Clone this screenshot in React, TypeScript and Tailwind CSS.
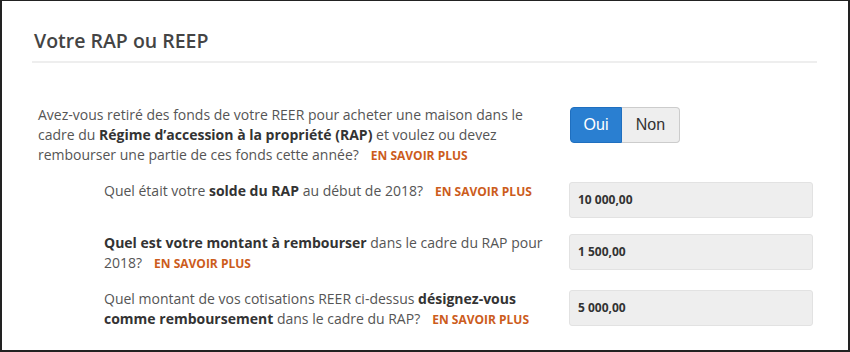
import React from "react";

const Info = () => (
  <span className="ml-3 whitespace-nowrap text-[12px] font-bold text-[#cc5c1c]">EN SAVOIR PLUS</span>
);

const B = ({ children }: { children: React.ReactNode }) => (
  <b className="font-bold text-[#333]">{children}</b>
);

function AmountRow({ label, value }: { label: React.ReactNode; value: string }) {
  return (
    <div className="flex items-start">
      <div className="w-[511px] shrink-0 pl-[66px] text-[14px] leading-[20px] text-[#555]">{label}</div>
      <div className="mt-[1px] ml-[20px] flex h-[36px] w-[244px] items-center rounded-[3px] border border-[#e2e2e2] bg-[#eeeeee] px-[8px] font-['Open_Sans',sans-serif] text-[12px] font-bold text-[#333]">
        {value}
      </div>
    </div>
  );
}

export default function App() {
  return (
    <div className="h-[352px] w-[850px] border-x-2 border-t border-b-2 border-[#222] bg-white font-['Open_Sans',sans-serif]">
      <div className="px-[30px] pt-[26px]">
        <h2 className="pl-[2px] text-[19.5px] font-semibold leading-[28px] text-[#444]">Votre RAP ou REEP</h2>
        <div className="mt-[6px] h-[2px] w-[785px] bg-[#eeeeee]" />

        <div className="mt-[42px] flex items-start pl-[6px]">
          <p className="w-[500px] shrink-0 text-[14px] leading-[20px] text-[#555]">
            Avez-vous retiré des fonds de votre REER pour acheter une maison dans le cadre du{" "}
            <B>Régime d’accession à la propriété (RAP)</B> et voulez ou devez rembourser une partie de ces
            fonds cette année?
            <Info />
          </p>
          <div className="ml-[32px] mt-[2px] flex font-['Liberation_Sans',Arial,sans-serif] text-[16px]">
            <button className="h-[36px] w-[52px] rounded-l-[4px] border border-[#1f6fbf] bg-[#2a7fd1] text-white">
              Oui
            </button>
            <button className="h-[36px] w-[58px] rounded-r-[4px] border border-l-0 border-[#cccccc] bg-[#eeeeee] text-[#333]">
              Non
            </button>
          </div>
        </div>

        <div className="mt-[15px] flex flex-col gap-[15px] pl-[6px]">
          <AmountRow
            label={
              <>
                Quel était votre <B>solde du RAP</B> au début de 2018?
                <Info />
              </>
            }
            value="10 000,00"
          />
          <AmountRow
            label={
              <>
                <B>Quel est votre montant à rembourser</B> dans le cadre du RAP pour 2018?
                <Info />
              </>
            }
            value="1 500,00"
          />
          <AmountRow
            label={
              <>
                Quel montant de vos cotisations REER ci-dessus <B>désignez-vous comme remboursement</B> dans le
                cadre du RAP?
                <Info />
              </>
            }
            value="5 000,00"
          />
        </div>
      </div>
    </div>
  );
}
